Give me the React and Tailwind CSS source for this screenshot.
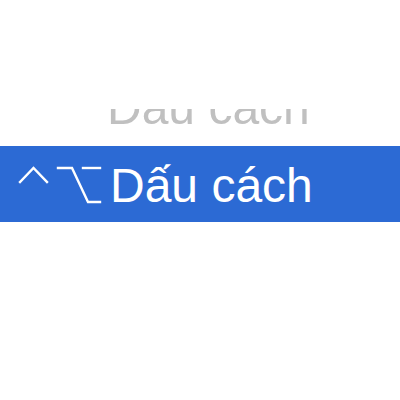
export default function App() {
  return (
    <div className="w-[400px] h-[400px] bg-white flex flex-col overflow-hidden" style={{ fontFamily: '"Liberation Sans", Arial, sans-serif' }}>
      <div className="h-[109px]" />
      {/* previous row, mostly scrolled out of view */}
      <div className="h-[37px] overflow-hidden">
        <div className="-mt-[25px] pl-[107px] text-[48px] leading-none text-[#c0c0c0] blur-[0.6px]">
          Dấu cách
        </div>
      </div>
      <div className="h-[76px] bg-[#2c6ad4] flex items-start text-white">
        <svg width="110" height="76" viewBox="0 0 110 76" className="shrink-0" fill="none" stroke="white" strokeWidth="2.4" strokeLinecap="square">
          {/* control key */}
          <path d="M20 36 L33.5 22 L47 36" />
          {/* option key */}
          <path d="M58 22 H72 L88 56 H100" />
          <path d="M83 22 H100" />
        </svg>
        <span className="pt-[16px] text-[48px] leading-none">Dấu cách</span>
      </div>
      <div className="flex-1" />
    </div>
  )
}
